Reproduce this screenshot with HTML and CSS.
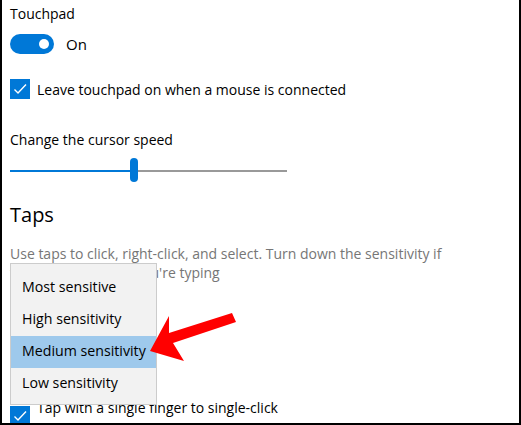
FILE: index.html
```html
<!DOCTYPE html>
<html lang="en">
<head>
    <meta charset="UTF-8">
    <title>Touchpad settings</title>
    <link rel="stylesheet" href="styles.css">
</head>
<body>
    <div class="frame">
        <div class="label">Touchpad</div>
        <div class="toggle-row">
            <span class="toggle"><span class="knob"></span></span>
            <span>On</span>
        </div>
        <div class="check-row">
            <span class="checkbox">
                <svg width="20" height="20" viewBox="0 0 20 20"><path d="M4.5 10.5 L8 14 L16 5.5" fill="none" stroke="#fff" stroke-width="1.4"/></svg>
            </span>
            <span>Leave touchpad on when a mouse is connected</span>
        </div>
        <div class="label speed">Change the cursor speed</div>
        <div class="slider">
            <span class="fill"></span>
            <span class="thumb"></span>
        </div>
        <h2>Taps</h2>
        <p class="desc">Use taps to click, right-click, and select. Turn down the sensitivity if<br><span class="tight">the cursor moves while yo</span>u're typing</p>
        <div class="check-row bottom">
            <span class="checkbox">
                <svg width="20" height="20" viewBox="0 0 20 20"><path d="M4.5 10.5 L8 14 L16 5.5" fill="none" stroke="#fff" stroke-width="1.4"/></svg>
            </span>
            <span>Tap with a single finger to single-click</span>
        </div>

        <ul class="menu">
            <li>Most sensitive</li>
            <li>High sensitivity</li>
            <li class="selected">Medium sensitivity</li>
            <li>Low sensitivity</li>
        </ul>

        <svg class="arrow" width="100" height="60" viewBox="0 0 100 60">
            <path d="M0 40 L19 5 L19 22 L82 2 L86 11 L23 32 L34 50 Z" fill="#f00"/>
        </svg>
    </div>
</body>
</html>
```

FILE: styles.css
```css
html, body {
    margin: 0;
    background: #fff;
}
.frame {
    position: relative;
    box-sizing: border-box;
    width: 521px;
    height: 425px;
    overflow: hidden;
    border: 2px solid #000;
    border-top: none;
    padding: 4px 0 0 8px;
    font-family: 'Open Sans', sans-serif;
    font-size: 14px;
    color: #000;
}
.label {
    line-height: 20px;
}
.toggle-row {
    display: flex;
    align-items: center;
    gap: 12px;
    margin-top: 10px;
    height: 20px;
    font-size: 15px;
}
.toggle {
    position: relative;
    width: 44px;
    height: 20px;
    border-radius: 10px;
    background: #0078d7;
}
.knob {
    position: absolute;
    top: 5px;
    right: 5px;
    width: 10px;
    height: 10px;
    border-radius: 50%;
    background: #fff;
}
.check-row {
    display: flex;
    align-items: center;
    gap: 7px;
    margin-top: 25px;
    height: 20px;
}
.checkbox {
    width: 20px;
    height: 20px;
    background: #0078d7;
    display: block;
    flex-shrink: 0;
}
.checkbox svg {
    display: block;
}
.speed {
    margin-top: 31px;
}
.slider {
    position: relative;
    width: 277px;
    height: 2px;
    margin-top: 20px;
    background: #999;
}
.fill {
    position: absolute;
    left: 0;
    top: 0;
    width: 122px;
    height: 2px;
    background: #0078d7;
}
.thumb {
    position: absolute;
    left: 120px;
    top: -12px;
    width: 8px;
    height: 24px;
    border-radius: 4px;
    background: #0078d7;
}
h2 {
    margin: 30px 0 0;
    font-size: 20px;
    font-weight: normal;
    line-height: 26px;
}
.desc {
    margin: 16px 0 0;
    color: #767676;
    line-height: 19px;
}
/* sits under the open menu, squeezed so the visible tail lines up */
.tight {
    letter-spacing: -1.2px;
}
.bottom {
    align-items: flex-start;
    margin-top: 116px;
    line-height: 20px;
}
.bottom .checkbox {
    margin-top: 8px;
}
.menu {
    position: absolute;
    left: 8px;
    top: 263px;
    width: 145px;
    margin: 0;
    padding: 8px 0 4px;
    list-style: none;
    background: #f2f2f2;
    border: 1px solid #ccc;
    font-size: 14.2px;
}
.menu li {
    height: 30px;
    line-height: 30px;
    padding: 0 0 2px 11px;
}
.menu .selected {
    background: #9ec9ec;
}
.arrow {
    position: absolute;
    left: 148px;
    top: 311px;
}
```
